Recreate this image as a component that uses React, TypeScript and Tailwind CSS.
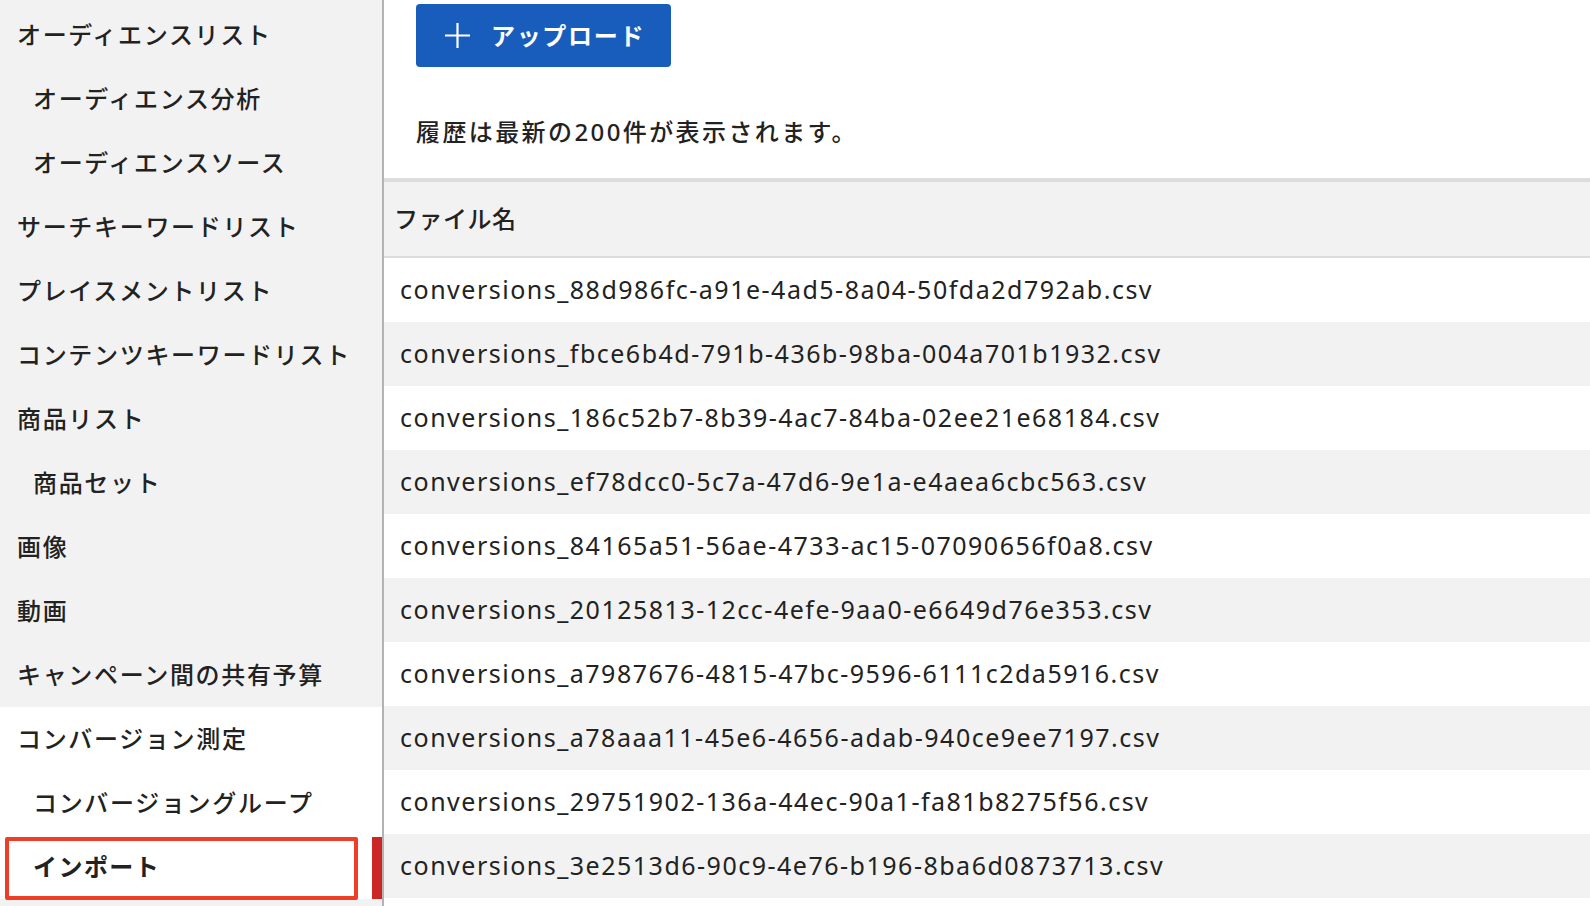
import React from "react";

const font = { fontFamily: '"Noto Sans", "Noto Sans CJK JP", sans-serif' };

type Item = { label: string; sub?: boolean };

const grayItems: Item[] = [
  { label: "オーディエンスリスト" },
  { label: "オーディエンス分析", sub: true },
  { label: "オーディエンスソース", sub: true },
  { label: "サーチキーワードリスト" },
  { label: "プレイスメントリスト" },
  { label: "コンテンツキーワードリスト" },
  { label: "商品リスト" },
  { label: "商品セット", sub: true },
  { label: "画像" },
  { label: "動画" },
  { label: "キャンペーン間の共有予算" },
];

const files = [
  "conversions_88d986fc-a91e-4ad5-8a04-50fda2d792ab.csv",
  "conversions_fbce6b4d-791b-436b-98ba-004a701b1932.csv",
  "conversions_186c52b7-8b39-4ac7-84ba-02ee21e68184.csv",
  "conversions_ef78dcc0-5c7a-47d6-9e1a-e4aea6cbc563.csv",
  "conversions_84165a51-56ae-4733-ac15-07090656f0a8.csv",
  "conversions_20125813-12cc-4efe-9aa0-e6649d76e353.csv",
  "conversions_a7987676-4815-47bc-9596-6111c2da5916.csv",
  "conversions_a78aaa11-45e6-4656-adab-940ce9ee7197.csv",
  "conversions_29751902-136a-44ec-90a1-fa81b8275f56.csv",
  "conversions_3e2513d6-90c9-4e76-b196-8ba6d0873713.csv",
];

function NavItem({ item }: { item: Item }) {
  return (
    <div
      className={`h-16 flex items-center text-[24px] font-medium tracking-[0.07em] text-[#222] ${
        item.sub ? "pl-[33px]" : "pl-[17px]"
      }`}
    >
      {item.label}
    </div>
  );
}

export default function App() {
  return (
    <div className="w-[1590px] h-[906px] overflow-hidden flex bg-white" style={font}>
      <aside className="w-[384px] shrink-0 h-full bg-[#f2f2f2] border-r-2 border-[#b3b3b3] pt-[3px]">
        {grayItems.map((it) => (
          <NavItem key={it.label} item={it} />
        ))}
        <div className="bg-white">
          <NavItem item={{ label: "コンバージョン測定" }} />
          <NavItem item={{ label: "コンバージョングループ", sub: true }} />
          <div className="relative h-16 flex items-center pl-[33px] text-[24px] tracking-[0.06em] font-bold text-[#222]">
            インポート
            <div className="absolute left-[5px] top-[2px] w-[353px] h-[63px] border-4 border-[#ee3f26] rounded-[2px]" />
            <div className="absolute right-0 top-[2px] w-[10px] h-[62px] bg-[#cc2724]" />
          </div>
        </div>
      </aside>
      <main className="flex-1 flex flex-col">
        <div className="pl-8 pt-1">
          <button className="w-[255px] h-[63px] rounded-[4px] bg-[#195dbc] flex items-center pl-[28px] gap-[20px] text-white text-[24px] font-semibold tracking-[0.07em]">
            <svg width="27" height="27" viewBox="0 0 27 27" fill="none" stroke="white" strokeWidth="2.2">
              <path d="M13.5 1v25M1 13.5h25" />
            </svg>
            アップロード
          </button>
          <p className="mt-[47px] mb-[28px] h-9 leading-9 text-[24px] font-medium tracking-[0.1em] text-[#222]">
            履歴は最新の200件が表示されます。
          </p>
        </div>
        <div className="border-t-4 border-[#dcdcdc]">
          <div className="h-[74px] bg-[#f2f2f2] border-b-2 border-[#dcdcdc] box-content flex items-center pl-[10px] text-[24px] font-medium tracking-[0.02em] text-[#222]">
            ファイル名
          </div>
          {files.map((f, i) => (
            <div
              key={f}
              className={`h-16 flex items-center pl-4 text-[25px] tracking-[1.5px] text-[#222] ${
                i % 2 === 1 ? "bg-[#f2f2f2]" : "bg-white"
              }`}
            >
              {f}
            </div>
          ))}
        </div>
      </main>
    </div>
  );
}
